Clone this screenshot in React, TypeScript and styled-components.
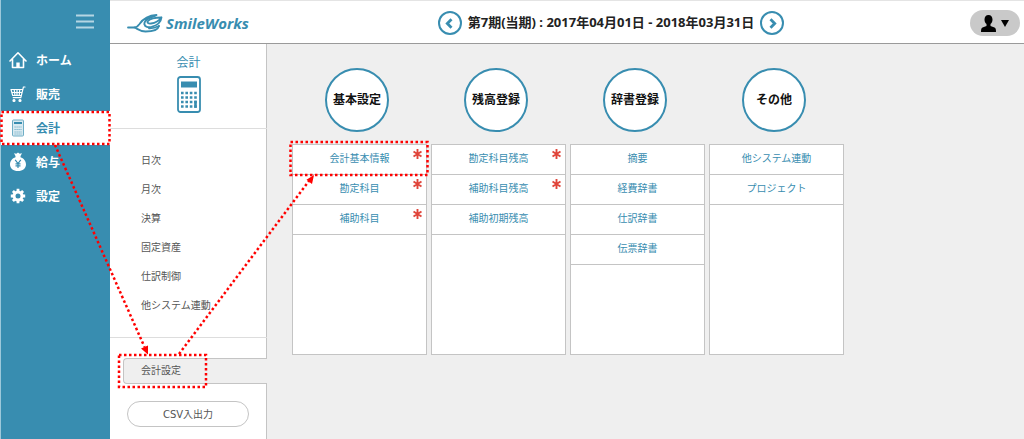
import React from "react";
import styled, { createGlobalStyle } from "styled-components";

const blue = "#388db0";
const line = "#c4c4c4";

const GlobalStyle = createGlobalStyle`
  * { box-sizing: border-box; }
  body {
    margin: 0;
    background: #efefef;
    font-family: "DejaVu Sans", "Noto Sans CJK JP", sans-serif;
    font-size: 10px;
    color: #555;
  }
  button { font: inherit; color: inherit; cursor: pointer; }
  a { color: inherit; text-decoration: none; }
  ul { list-style: none; margin: 0; padding: 0; }
  h1, h2 { margin: 0; }
`;

const Shell = styled.div`
  position: relative;
  display: grid;
  grid-template-columns: 110px 1fr;
  min-height: 100vh;
  overflow: hidden;
`;

const Sidebar = styled.aside`
  background: ${blue};
  border-left: 1px solid #9cc8da;
`;

const MenuBar = styled.div`
  display: flex;
  justify-content: flex-end;
  align-items: center;
  height: 43px;
  padding-right: 16px;
`;

const MenuButton = styled.button`
  display: flex;
  padding: 0;
  border: 0;
  background: none;
`;

const NavLink = styled.a<{ $active?: boolean }>`
  display: flex;
  align-items: center;
  gap: 9px;
  height: 34px;
  padding-left: 8px;
  font-size: 12px;
  font-weight: 700;
  color: ${(p) => (p.$active ? blue : "#fff")};
  background: ${(p) => (p.$active ? "#fff" : "transparent")};
`;

const NavLabel = styled.span`
  padding-bottom: 2px;
`;

const Page = styled.div`
  display: flex;
  flex-direction: column;
  min-width: 0;
`;

const Header = styled.header`
  display: grid;
  grid-template-columns: 140px 1fr 65px;
  align-items: center;
  height: 44px;
  padding: 2px 4px 0 17px;
  background: #fff;
  border-top: 1px solid #e4e4e4;
  border-bottom: 1px solid #9a9a9a;
`;

const Brand = styled.a`
  display: flex;
  align-items: center;
  gap: 3px;
  font-family: "Open Sans", sans-serif;
  font-size: 15px;
  font-style: italic;
  font-weight: 700;
  color: ${blue};
`;

const Period = styled.div`
  display: flex;
  align-items: center;
  justify-content: center;
  gap: 6px;
`;

const PeriodTitle = styled.h1`
  padding-bottom: 2px;
  font-family: "Noto Sans", "Noto Sans CJK JP", sans-serif;
  font-size: 13px;
  line-height: 18px;
  font-weight: 700;
  color: #222;
  white-space: nowrap;
`;

const RoundButton = styled.button`
  display: flex;
  align-items: center;
  justify-content: center;
  width: 24px;
  height: 24px;
  padding: 0;
  border: 2px solid ${blue};
  border-radius: 50%;
  background: #fff;
`;

const UserButton = styled.button`
  display: flex;
  align-items: center;
  justify-content: center;
  justify-self: end;
  gap: 5px;
  width: 50px;
  height: 26px;
  padding: 0;
  border: 0;
  border-radius: 13px;
  background: #c9c9c9;
`;

const Body = styled.div`
  display: grid;
  grid-template-columns: 157px 1fr;
  flex: 1;
`;

const Panel = styled.section`
  display: flex;
  flex-direction: column;
  background: linear-gradient(${line}, ${line}) right / 1px 100% no-repeat #fff;
`;

const PanelHead = styled.div`
  display: flex;
  flex-direction: column;
  align-items: center;
  gap: 4px;
  height: 85px;
  padding-top: 10px;
  border-bottom: 1px solid #ddd;
`;

const PanelTitle = styled.h2`
  font-size: 12px;
  line-height: 18px;
  font-weight: 400;
  color: ${blue};
`;

const PanelList = styled.ul`
  height: 209px;
  padding-top: 17px;
  border-bottom: 1px solid #ddd;
`;

const PanelLink = styled.a`
  display: block;
  padding-left: 31px;
  line-height: 29px;
`;

const ActiveTab = styled.a`
  display: block;
  margin: 20px 0 0 13px;
  padding-left: 17px;
  line-height: 24px;
  background: #efefef;
  border: 1px solid ${line};
  border-right: 0;
  border-radius: 4px 0 0 4px;
`;

const PillButton = styled.button`
  width: 122px;
  height: 26px;
  margin: 17px 0 0 17px;
  padding: 0 0 2px;
  border: 1px solid ${line};
  border-radius: 13px;
  background: #fff;
`;

const Main = styled.main`
  display: grid;
  grid-template-columns: repeat(4, 135px);
  align-content: start;
  gap: 4px;
  padding: 24px 24px 24px 25px;
`;

const Column = styled.section`
  display: flex;
  flex-direction: column;
  gap: 12px;
`;

const Circle = styled.h2`
  display: flex;
  align-items: center;
  justify-content: center;
  width: 64px;
  height: 64px;
  margin-left: 33px;
  padding-bottom: 3px;
  border: 2px solid ${blue};
  border-radius: 50%;
  background: #fff;
  color: #111;
  font-size: 12px;
  white-space: nowrap;
`;

const Card = styled.ul`
  min-height: 211px;
  background: #fff;
  border: 1px solid ${line};
`;

const CardLink = styled.a`
  position: relative;
  display: block;
  height: 30px;
  line-height: 28px;
  border-bottom: 1px solid ${line};
  text-align: center;
  color: ${blue};
`;

const Required = styled.span`
  position: absolute;
  top: 4px;
  right: 4px;
  display: flex;
`;

const Guides = styled.svg`
  position: absolute;
  top: 0;
  left: 0;
  pointer-events: none;
`;

const HomeIcon = () => (
  <svg width="18" height="18" viewBox="0 0 18 18" fill="none" stroke="#fff" strokeWidth="1.6" strokeLinejoin="round" strokeLinecap="round">
    <path d="M1 10 9 1.800l8 8.200M3.500 8.500v8h11v-8" />
    <path d="M7.300 11.500h3.400v5H7.300z" fill="#fff" stroke="none" />
  </svg>
);

const CartIcon = () => (
  <svg width="18" height="18" viewBox="0 0 18 18" fill="none" stroke="#fff" strokeWidth="1.2" strokeLinecap="round">
    <path d="M16 2h-1.600l-2.600 10.600H4.200M2 4.500h11.600M2 4.500l1.700 6h8.500M2.800 7.500H13M5.200 4.500l.8 6M8 4.500v6M10.800 4.500l-.6 6" />
    <circle cx="5" cy="15.500" r="1" fill="#fff" />
    <circle cx="11" cy="15.500" r="1" fill="#fff" />
  </svg>
);

const SmallCalcIcon = () => (
  <svg width="18" height="18" viewBox="0 0 18 18">
    <rect x="3.500" y="1" width="11" height="16" rx="1" fill="#d9eaf1" stroke="#6faec6" />
    <path d="M5 3h8v2H5z" fill={blue} />
    <path d="M5.500 8h7M5.500 10.500h7M5.500 13h7M5.500 15h7" stroke="#6faec6" strokeDasharray="1.200 .8" />
  </svg>
);

const YenIcon = () => (
  <svg width="18" height="20" viewBox="0 0 18 20">
    <path d="M6.500 4 5 1.200 7.300 1.800 9 .6l1.700 1.200 2.300-.6L11.500 4v1.200c3.200 1 5.500 3.800 5.500 7.300 0 3.800-3.200 6.500-8 6.500s-8-2.700-8-6.500c0-3.500 2.300-6.300 5.500-7.300z" fill="#fff" />
    <path d="M6.200 7.800 9 11.500l2.800-3.700M9 11.500V16M6.500 11.800h5M6.500 13.800h5" fill="none" stroke={blue} strokeWidth="1.200" />
  </svg>
);

const GearIcon = () => (
  <svg width="18" height="18" viewBox="0 0 18 18" fill="none" stroke="#fff">
    <circle cx="9" cy="9" r="4" strokeWidth="3" />
    <path d="M9 4V1.800M9 14v2.200M4 9H1.800M14 9h2.200M5.500 5.500 3.900 3.900M12.500 12.500l1.600 1.600M12.500 5.500l1.600-1.600M5.500 12.500l-1.600 1.600" strokeWidth="2.800" />
  </svg>
);

const CalcIcon = () => (
  <svg width="24" height="37" viewBox="0 0 24 37">
    <rect x="1" y="1" width="22" height="35" rx="2.500" fill="#fff" stroke={blue} strokeWidth="1.800" />
    <path d="M4 5.500h16v6H4z" fill={blue} />
    {[17, 21.5, 26, 30.5].map((y) => (
      <path key={y} d={`M4 ${y}h16`} stroke={blue} strokeWidth="2.600" strokeDasharray="2.600 1.800" />
    ))}
    <path d="M18.500 24.700v7.100" stroke={blue} strokeWidth="2.600" />
  </svg>
);

const BirdIcon = () => (
  <svg width="36" height="20" viewBox="0 0 36 20" fill="none" stroke={blue} strokeWidth="1.800" strokeLinecap="round" strokeLinejoin="round">
    <path d="M1 14.500h6.500c2 0 3.500-1.500 5-3.500 3.500-5 8-8.500 17-9-2.500 2-7 2-10 5-1.500 1.500-2.500 3-2 4" />
    <path d="M7.500 14.500c3 1.200 5.500 4 11 4 6.500 0 12.500-1.500 13.500-5.500" />
    <path d="M34.500 4.500c-5 0-11 .5-13.500 3.500-1.500 2 .5 2.800 3 2.500 4-.5 8-2.500 10.500-6-.5 5-5 8-10 9.300-3.500.8-6.500.2-7-2.300" />
    <path d="M32 13c-3 1.500-6.500 2.500-10 2.300" />
  </svg>
);

const Chevron = ({ d }: { d: string }) => (
  <svg width="11" height="11" viewBox="0 0 11 11" fill="none" stroke={blue} strokeWidth="2.800">
    <path d={d} />
  </svg>
);

const navItems = [
  { label: "ホーム", icon: <HomeIcon /> },
  { label: "販売", icon: <CartIcon /> },
  { label: "会計", icon: <SmallCalcIcon />, active: true },
  { label: "給与", icon: <YenIcon /> },
  { label: "設定", icon: <GearIcon /> },
];

const panelItems = ["日次", "月次", "決算", "固定資産", "仕訳制御", "他システム連動"];

const columns = [
  { title: "基本設定", items: ["会計基本情報", "勘定科目", "補助科目"], required: 3 },
  { title: "残高登録", items: ["勘定科目残高", "補助科目残高", "補助初期残高"], required: 2 },
  { title: "辞書登録", items: ["摘要", "経費辞書", "仕訳辞書", "伝票辞書"], required: 0 },
  { title: "その他", items: ["他システム連動", "プロジェクト"], required: 0 },
];

export default function App() {
  return (
    <>
      <GlobalStyle />
      <Shell>
        <Sidebar>
          <MenuBar>
            <MenuButton aria-label="メニュー">
              <svg width="18" height="15" viewBox="0 0 18 15" stroke="#b5d6e3" strokeWidth="2">
                <path d="M0 1.500h18M0 7.500h18M0 13.500h18" />
              </svg>
            </MenuButton>
          </MenuBar>
          <nav>
            {navItems.map((n) => (
              <NavLink key={n.label} href="#" $active={n.active}>
                {n.icon}
                <NavLabel>{n.label}</NavLabel>
              </NavLink>
            ))}
          </nav>
        </Sidebar>
        <Page>
          <Header>
            <Brand href="#">
              <BirdIcon />
              SmileWorks
            </Brand>
            <Period>
              <RoundButton aria-label="前の期"><Chevron d="M7.500 1.200 3.300 5.500l4.200 4.300" /></RoundButton>
              <PeriodTitle>第7期(当期) : 2017年04月01日 - 2018年03月31日</PeriodTitle>
              <RoundButton aria-label="次の期"><Chevron d="M3.500 1.200l4.200 4.300-4.200 4.300" /></RoundButton>
            </Period>
            <UserButton aria-label="ユーザー">
              <svg width="15" height="17" viewBox="0 0 15 17">
                <path d="M7.500 0C10 0 11.500 1.800 11.500 4.500c0 2-.8 3.500-2 4.500v2l4 1.500c1 .5 1.500 1.500 1.500 4.500H0c0-3 .5-4 1.500-4.500l4-1.500V9c-1.200-1-2-2.500-2-4.500C3.500 1.800 5 0 7.500 0z" />
              </svg>
              <svg width="8" height="7" viewBox="0 0 8 7"><path d="M0 0h8L4 7z" /></svg>
            </UserButton>
          </Header>
          <Body>
            <Panel>
              <PanelHead>
                <PanelTitle>会計</PanelTitle>
                <CalcIcon />
              </PanelHead>
              <PanelList>
                {panelItems.map((t) => (
                  <li key={t}><PanelLink href="#">{t}</PanelLink></li>
                ))}
              </PanelList>
              <ActiveTab href="#">会計設定</ActiveTab>
              <PillButton>CSV入出力</PillButton>
            </Panel>
            <Main>
              {columns.map((c) => (
                <Column key={c.title}>
                  <Circle>{c.title}</Circle>
                  <Card>
                    {c.items.map((t, i) => (
                      <li key={t}>
                        <CardLink href="#">
                          {t}
                          {i < c.required && (
                            <Required>
                              <svg width="9" height="10" viewBox="0 0 9 10" stroke="#e0453a" strokeWidth="1.900">
                                <path d="M4.500 0v10M.5 2.500l8 5M8.500 2.500l-8 5" />
                              </svg>
                            </Required>
                          )}
                        </CardLink>
                      </li>
                    ))}
                  </Card>
                </Column>
              ))}
            </Main>
          </Body>
        </Page>
        <Guides width="440" height="400" viewBox="0 0 440 400" fill="none" stroke="#f00" strokeWidth="2.500" strokeDasharray="2.500 2.500" aria-hidden="true">
          <rect x="1.500" y="112" width="108" height="32" />
          <rect x="119" y="355" width="87" height="32" />
          <rect x="290.500" y="142" width="137" height="33" />
          <path d="M55 145 144.500 347" />
          <path d="M179 354 309 181" />
          <path d="M148 354.500l-7-6 7-3zM314 175l-2 9-5.500-4.200z" fill="#f00" stroke="none" />
        </Guides>
      </Shell>
    </>
  );
}
